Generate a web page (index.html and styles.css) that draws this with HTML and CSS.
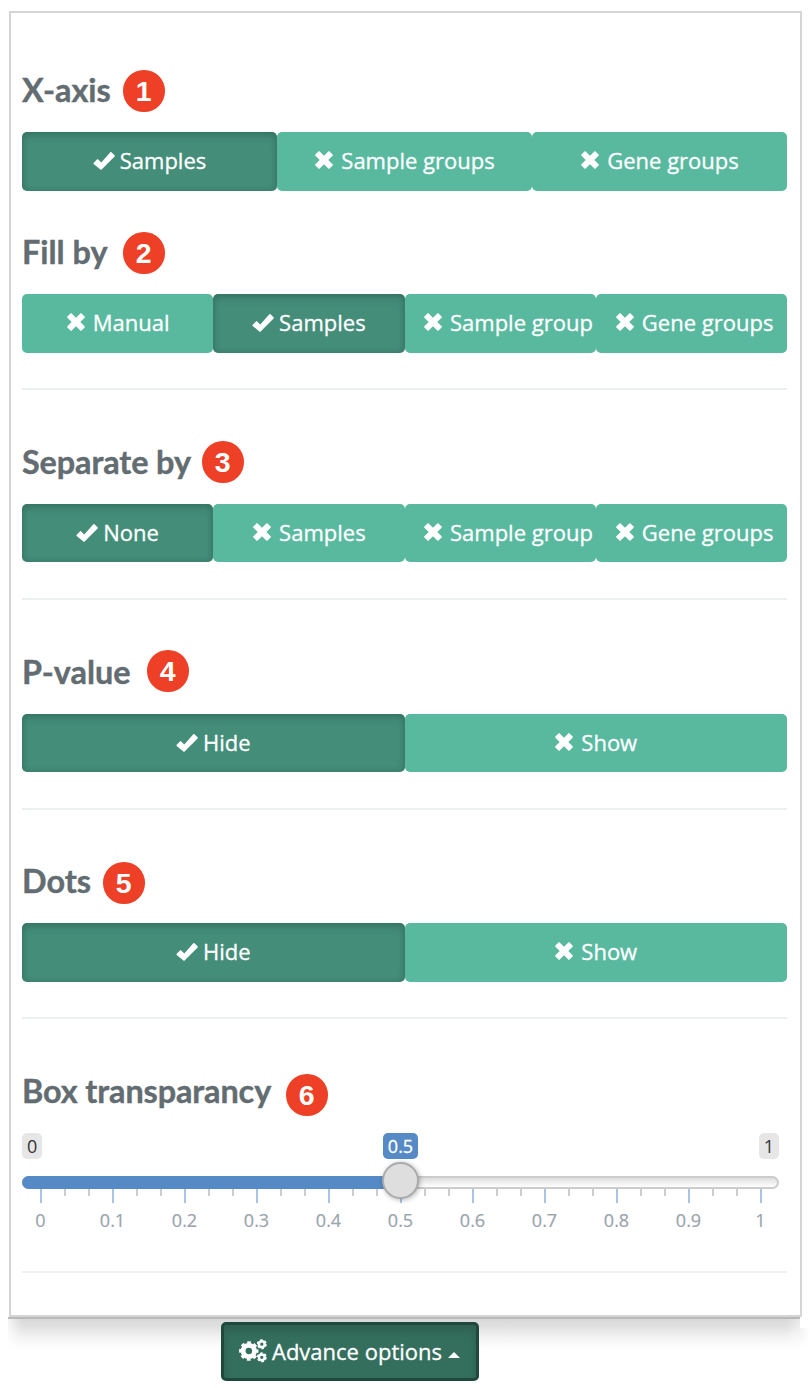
FILE: index.html
```html
<!DOCTYPE html>
<html lang="en">
<head>
<meta charset="utf-8">
<title>Plot options</title>
<link rel="stylesheet" href="styles.css">
</head>
<body>
<svg class="defs" width="0" height="0">
  <symbol id="ok" viewBox="0 0 22 20"><path d="M.7 11.800 4 8.400q.6-.6 1.200 0L8.300 11.500 17.300 1.200q.6-.6 1.200 0L21.600 4.200q.5.600 0 1.200L8.600 18.600q-.6.600-1.200 0L.7 13q-.5-.6 0-1.200Z"/></symbol>
  <symbol id="no" viewBox="0 0 18 18"><path d="M4.700.4 9 4.700 13.300.4q.6-.6 1.200 0L17.600 3.500q.6.600 0 1.200L13.300 9l4.300 4.300q.6.600 0 1.200l-3.100 3.100q-.6.600-1.200 0L9 13.300l-4.300 4.300q-.6.600-1.200 0L.4 14.500q-.6-.6 0-1.200L4.700 9 .4 4.700q-.6-.6 0-1.200L3.500.4q.6-.6 1.200 0Z"/></symbol>
</svg>
<main class="panel">
  <section>
    <h2>X-axis<b class="badge b1">1</b></h2>
    <div class="group">
      <button class="on"><svg class="ok"><use href="#ok"/></svg>Samples</button>
      <button><svg class="no"><use href="#no"/></svg>Sample groups</button>
      <button><svg class="no"><use href="#no"/></svg>Gene groups</button>
    </div>
  </section>
  <section class="ruled">
    <h2>Fill by<b class="badge b2">2</b></h2>
    <div class="group">
      <button><svg class="no"><use href="#no"/></svg>Manual</button>
      <button class="on"><svg class="ok"><use href="#ok"/></svg>Samples</button>
      <button class="clip"><svg class="no"><use href="#no"/></svg>Sample group</button>
      <button class="last"><svg class="no"><use href="#no"/></svg>Gene groups</button>
    </div>
  </section>
  <section class="ruled">
    <h2 class="tight">Separate by<b class="badge b3">3</b></h2>
    <div class="group short">
      <button class="on"><svg class="ok"><use href="#ok"/></svg>None</button>
      <button><svg class="no"><use href="#no"/></svg>Samples</button>
      <button class="clip"><svg class="no"><use href="#no"/></svg>Sample group</button>
      <button class="last"><svg class="no"><use href="#no"/></svg>Gene groups</button>
    </div>
  </section>
  <section class="ruled pvalue">
    <h2>P-value<b class="badge b4">4</b></h2>
    <div class="group short">
      <button class="on"><svg class="ok"><use href="#ok"/></svg>Hide</button>
      <button><svg class="no"><use href="#no"/></svg>Show</button>
    </div>
  </section>
  <section class="ruled">
    <h2>Dots<b class="badge b5">5</b></h2>
    <div class="group">
      <button class="on"><svg class="ok"><use href="#ok"/></svg>Hide</button>
      <button><svg class="no"><use href="#no"/></svg>Show</button>
    </div>
  </section>
  <section class="ruled box">
    <h2 class="tight">Box transparancy<b class="badge b6">6</b></h2>
    <div class="slider">
      <div class="tags"><span>0</span><span class="now">0.5</span><span>1</span></div>
      <div class="track"><div class="fill"></div><div class="handle"></div></div>
      <div class="ticks"><i></i><i></i><i></i><i></i><i></i><i></i><i></i><i></i><i></i><i></i><i></i><i></i><i></i><i></i><i></i><i></i><i></i><i></i><i></i><i></i><i></i><i></i><i></i><i></i><i></i><i></i><i></i><i></i><i></i><i></i><i></i></div>
      <div class="scale"><span>0</span><span>0.1</span><span>0.2</span><span>0.3</span><span>0.4</span><span>0.5</span><span>0.6</span><span>0.7</span><span>0.8</span><span>0.9</span><span>1</span></div>
    </div>
  </section>
</main>
<footer>
  <button class="advance">
    <svg class="cogs" viewBox="0 0 28 24"><g fill="none" stroke="#fff"><circle cx="9.800" cy="12" r="5.700" stroke-width="4.800"/><circle cx="9.800" cy="12" r="8.500" stroke-width="2.400" stroke-dasharray="3.700 2.976" stroke-dashoffset="1.850"/><circle cx="22.800" cy="5.200" r="2.900" stroke-width="2.500"/><circle cx="22.800" cy="5.200" r="4.300" stroke-width="1.400" stroke-dasharray="2.500 2.003"/><circle cx="22.800" cy="18.300" r="2.900" stroke-width="2.500"/><circle cx="22.800" cy="18.300" r="4.300" stroke-width="1.400" stroke-dasharray="2.500 2.003"/></g></svg>
    <span>Advance options</span><i class="caret"></i>
  </button>
</footer>
</body>
</html>
```
FILE: styles.css
```css
* { box-sizing: border-box; }
body { margin: 0; background: #fff; font-family: "Open Sans", "Noto Sans", sans-serif; overflow: hidden; }
.defs { display: block; height: 0; }
.panel { width: 793px; height: 1306px; margin: 11px 0 0 9px; padding: 56px 13px 0 11px; border: 2px solid #d5d5d5; }
section { height: 162px; }
.ruled { height: 159px; border-bottom: 2px solid #ecf0f1; margin-bottom: 51px; }
.pvalue { margin-bottom: 50px; }
h2 { position: relative; margin: 0 0 23px; height: 40px; font: 700 32.4px/42px Lato, sans-serif; color: #626c71; -webkit-text-stroke: .4px #626c71; white-space: nowrap; }
.tight { letter-spacing: -.1px; }
.badge { position: absolute; width: 41.5px; height: 41.5px; border-radius: 50%; background: #ed4026; color: #fff; font: 700 28.5px/42px "Liberation Sans", sans-serif; letter-spacing: 0; text-align: center; -webkit-text-stroke: 0; }
.b1 { left: 101px; top: 1px; }
.b2 { left: 101px; top: 1px; }
.b3 { left: 180px; top: 0; }
.b4 { left: 125px; top: -1px; }
.b5 { left: 81px; top: 2px; }
.b6 { left: 264px; top: 4px; }
.group { display: grid; grid-auto-flow: column; grid-auto-columns: minmax(0, 1fr); height: 59px; }
.short { height: 58px; }
button { font: 400 22px/32px "Open Sans", sans-serif; color: #fff; border: 0; -webkit-text-stroke: .3px #fff; }
.group button { min-width: 0; display: flex; align-items: center; justify-content: center; padding: 0 0 3px 1px; border-radius: 5px; background: #58b99f; white-space: nowrap; overflow: hidden; }
.short button { padding-bottom: 2px; }
.group .on { padding-left: 0; background: #438d79; box-shadow: inset 0 4px 8px rgba(0,0,0,.13), inset 0 0 5px 2px rgba(0,0,0,.08); }
.group .clip { justify-content: flex-start; padding-left: 19.500px; }
.group .last { padding-left: 6.500px; }
.ok { width: 22px; height: 20px; margin: 1px 5px 0 0; fill: #fff; flex: none; }
.no { width: 18px; height: 18px; margin: 0 8px 0 0; fill: #fff; flex: none; }
.box { height: 203px; }
.slider { width: 757px; }
.tags { display: flex; justify-content: space-between; height: 26px; }
.tags span { min-width: 20px; padding: 0 5px; border-radius: 5px; background: #e6e6e6; color: #333; font-size: 18px; line-height: 26px; text-align: center; }
.tags .now { background: #558ac6; color: #fff; -webkit-text-stroke: .3px #fff; }
.track { position: relative; height: 13px; margin-top: 17px; border: 2px solid #ccc; border-radius: 7px; background: linear-gradient(#dedede, #fff); }
.fill { width: 378px; height: 13px; margin: -2px 0 0 -2px; border-radius: 7px 0 0 7px; background: #558ac6; }
.handle { position: absolute; left: 358px; top: -16px; width: 37px; height: 37px; border: 2px solid #ababab; border-radius: 50%; background: #dedede; box-shadow: 1px 1px 5px rgba(0,0,0,.3); }
.ticks { display: flex; justify-content: space-between; width: 722px; height: 14px; margin-left: 18px; }
.ticks i { width: 2px; height: 7px; background: #ccc; }
.ticks i:nth-child(3n+1) { height: 14px; background: #a9c4e5; }
.scale { display: flex; width: 792px; margin: 5px 0 0 -17.5px; font-size: 18px; line-height: 25px; color: #99a4ac; -webkit-text-stroke: .2px #99a4ac; }
.scale span { flex: 1; text-align: center; }
footer { position: relative; width: 792px; height: 71px; margin-left: 8px; padding: 3px 0 0 213px; border-top: 2px solid #b9b9b9; background: linear-gradient(90deg, rgba(255,255,255,.75), transparent 14px, transparent 778px, rgba(255,255,255,.45)), linear-gradient(#d8d8d8, #e0e0e0 7px, #f4f4f4 19px, #fff 31px); }
footer::after { content: ""; position: absolute; left: 792px; top: 9px; width: 10px; height: 20px; background: linear-gradient(90deg, transparent, #fff), linear-gradient(#f1f1f1, #fff); }
.advance { display: flex; align-items: center; width: 258px; height: 59px; padding: 0 0 2px 15px; border: 3px solid #20493d; border-radius: 5px; background: #346e5d; box-shadow: inset 0 6px 8px rgba(0,0,0,.13); white-space: nowrap; }
.cogs { width: 28px; height: 24px; margin: 1px 5px 0 0; flex: none; }
.caret { margin: 8px 0 0 6px; border: 6px solid transparent; border-top: 0; border-bottom-color: #fff; }
```
